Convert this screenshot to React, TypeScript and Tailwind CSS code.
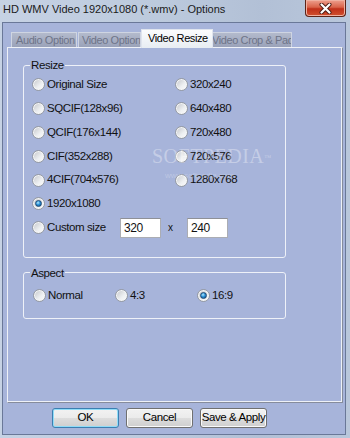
import React from "react"

const UI_FONT = "font-['Liberation_Sans',Arial,sans-serif] tracking-[-0.4px]"

function Radio({ checked }: { checked?: boolean }) {
  return (
    <span className="w-[13px] h-[13px] shrink-0 rounded-full border border-[#959aa3] bg-[linear-gradient(135deg,#c2c4c8,#eef0f2_60%,#fbfbfb)] shadow-[inset_0_0_0_1px_#f4f5f6] flex items-center justify-center">
      {checked && (
        <span className="w-[7px] h-[7px] rounded-full border border-[#1f4a74] bg-[radial-gradient(circle_at_40%_35%,#b4eaff,#2b91d6_45%,#0b4682)]" />
      )}
    </span>
  )
}

function Option({ label, checked }: { label: string; checked?: boolean }) {
  return (
    <div className="flex items-center h-[23.8px]">
      <Radio checked={checked} />
      <span className="ml-[2px] whitespace-nowrap">{label}</span>
    </div>
  )
}

function Button({ children, primary }: { children: React.ReactNode; primary?: boolean }) {
  return (
    <button
      type="button"
      className={
        primary
          ? "w-[67px] h-[20px] rounded-[3px] border border-[#3c7fb1] bg-[linear-gradient(#f2f2f2,#ebebeb_50%,#dddddd_50%,#cfcfcf)] shadow-[inset_0_0_0_1px_#8fdcf8] leading-none text-black whitespace-nowrap"
          : "w-[67px] h-[20px] rounded-[3px] border border-[#707070] bg-[linear-gradient(#f2f2f2,#ebebeb_50%,#dddddd_50%,#cfcfcf)] shadow-[inset_0_0_0_1px_#fafafa] leading-none text-black whitespace-nowrap"
      }
    >
      {children}
    </button>
  )
}

export default function App() {
  return (
    <div className={"relative w-[350px] h-[438px] overflow-hidden flex flex-col bg-[linear-gradient(90deg,#c6d2e4,#bccadd_45%,#b2c0d6_75%,#b9c7db)] text-[11.5px] text-[#111] " + UI_FONT}>
      {/* title bar */}
      <div className="h-[22px] shrink-0 flex items-start">
        <div className="pl-[3px] pt-[3px] text-[11px] leading-[13px] tracking-normal text-[#1a1a1a] whitespace-nowrap">
          HD WMV Video 1920x1080 (*.wmv) - Options
        </div>
        <div className="ml-auto mr-[4px] w-[41px] h-[17px] rounded-b-[4px] border border-t-0 border-[#5c2318] bg-[linear-gradient(#eea08e,#d9634a_45%,#c0301a_55%,#d0502f)] shadow-[inset_0_0_0_1px_#f0b0a0] flex items-center justify-center">
          <svg width="13" height="11" viewBox="0 0 13 11">
            <path d="M2.5 1.5 L10.5 9.5 M10.5 1.5 L2.5 9.5" stroke="#4a1a12" strokeWidth="4" strokeLinecap="round" />
            <path d="M2.5 1.5 L10.5 9.5 M10.5 1.5 L2.5 9.5" stroke="#ffffff" strokeWidth="2.2" strokeLinecap="round" />
          </svg>
        </div>
      </div>

      {/* client area */}
      <div className="flex-1 ml-[2px] mr-[4px] mb-[3px] border border-[#6a7898] bg-[#a7b4da] flex flex-col">
        {/* tabs */}
        <div className="h-[24px] shrink-0 flex items-end pl-[8px] text-[11px]">
          <div className="w-[66px] h-[15px] border border-b-0 border-[#cfd5e2] bg-[linear-gradient(#b3bacc,#9aa2b9)] text-[#6e7488] leading-[14px] pl-[4px] whitespace-nowrap overflow-hidden">
            Audio Option
          </div>
          <div className="ml-[1px] w-[63px] h-[15px] border border-b-0 border-[#cfd5e2] bg-[linear-gradient(#b3bacc,#9aa2b9)] text-[#6e7488] leading-[14px] pl-[3px] whitespace-nowrap overflow-hidden">
            Video Option
          </div>
          <div className="relative z-10 w-[72px] h-[19px] -mb-[1px] border border-b-0 border-[#dfe4ee] bg-[linear-gradient(#fbfcfd,#e8edf3)] text-black leading-[17px] pl-[6px] whitespace-nowrap">
            Video Resize
          </div>
          <div className="w-[79px] h-[15px] border border-b-0 border-l-0 border-[#cfd5e2] bg-[linear-gradient(#b3bacc,#9aa2b9)] text-[#6e7488] leading-[14px] whitespace-nowrap overflow-hidden">
            <span className="ml-[-1px]">Video Crop &amp; Pad</span>
          </div>
        </div>

        {/* tab page */}
        <div className="ml-[4px] w-[336px] h-[356px] shrink-0 border border-[#eef1f7] border-r-[#868c9c] border-b-[#868c9c] shadow-[inset_-1px_-1px_0_#eef1f7] pl-[15px] pt-[10px]">
          <fieldset className="w-[263px] border border-[#eef1f8] rounded-[3px] pl-[8px] pt-[1px] pb-[17px]">
            <legend className="ml-[-2px] px-[1px] leading-[14px]">Resize</legend>
            <div className="grid grid-cols-[143px_1fr]">
              <Option label="Original Size" />
              <Option label="320x240" />
              <Option label="SQCIF(128x96)" />
              <Option label="640x480" />
              <Option label="QCIF(176x144)" />
              <Option label="720x480" />
              <Option label="CIF(352x288)" />
              <Option label="720x576" />
              <Option label="4CIF(704x576)" />
              <Option label="1280x768" />
              <Option label="1920x1080" checked />
              <div />
            </div>
            <div className="flex items-center h-[23.8px]">
              <div className="w-[88px] flex items-center">
                <Radio />
                <span className="ml-[2px] whitespace-nowrap">Custom size</span>
              </div>
              <div className="w-[41px] h-[20px] border border-[#abadb3] border-t-[#8e9097] bg-white pl-[3px] leading-[18px] text-[12px]">320</div>
              <span className="ml-[7px] w-[6px] text-[10px]">x</span>
              <div className="ml-[13px] w-[41px] h-[20px] border border-[#abadb3] border-t-[#8e9097] bg-white pl-[3px] leading-[18px] text-[12px]">240</div>
            </div>
          </fieldset>

          <fieldset className="mt-[8px] w-[263px] border border-[#eef1f8] rounded-[3px] pl-[9px] pt-[4px] pb-[10px]">
            <legend className="ml-[-3px] px-[1px] leading-[14px]">Aspect</legend>
            <div className="grid grid-cols-[82px_82px_1fr] h-[24px]">
              <Option label="Normal" />
              <Option label="4:3" />
              <Option label="16:9" checked />
            </div>
          </fieldset>
        </div>

        {/* buttons */}
        <div className="mt-[5px] pl-[49px] flex gap-[7px]">
          <Button primary>OK</Button>
          <Button>Cancel</Button>
          <Button>Save &amp; Apply</Button>
        </div>
      </div>

      {/* watermark */}
      <div className="absolute left-[152px] top-[145px] pointer-events-none select-none text-white/35 tracking-normal">
        <div className="font-['Liberation_Serif',serif] text-[20px] leading-[22px] tracking-[0.5px]">
          SOFTPEDIA<sup className="text-[7px]">™</sup>
        </div>
        <div className="ml-[13px] mt-[4px] text-[8px] leading-[9px] text-white/25">
          www.softpedia.com
        </div>
      </div>
    </div>
  )
}
